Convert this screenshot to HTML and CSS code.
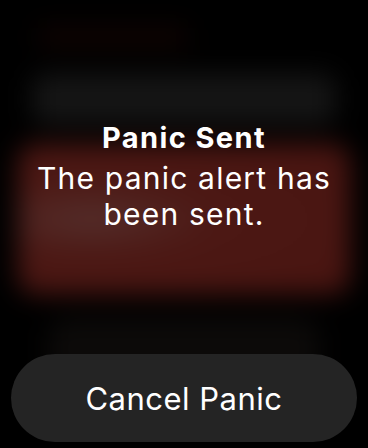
FILE: index.html
```html
<!DOCTYPE html>
<html lang="en">
<head>
    <meta charset="UTF-8">
    <meta name="viewport" content="width=device-width, initial-scale=1.0">
    <title>Panic Sent</title>
    <link rel="stylesheet" href="styles.css">
</head>
<body>
    <div class="screen">
        <!-- blurred app content behind the alert -->
        <div class="backdrop">
            <div class="blur-title"></div>
            <div class="blur-row"></div>
            <div class="blur-card"></div>
            <div class="blur-foot"></div>
        </div>

        <div class="alert">
            <div class="alert-text">
                <h1 class="alert-title">Panic Sent</h1>
                <p class="alert-message">The panic alert has been sent.</p>
            </div>
            <button class="btn-cancel">Cancel Panic</button>
        </div>
    </div>
</body>
</html>
```

FILE: styles.css
```css
* {
    margin: 0;
    padding: 0;
    box-sizing: border-box;
}

body {
    background-color: #000;
    font-family: 'Inter', 'Roboto', sans-serif;
    color: #fff;
    overflow: hidden;
}

.screen {
    position: relative;
    width: 368px;
    height: 448px;
}

.backdrop {
    position: absolute;
    inset: 0;
    display: flex;
    flex-direction: column;
    padding: 26px 18px 0;
    filter: blur(13px);
}

.blur-title {
    width: 150px;
    height: 22px;
    margin-left: 20px;
    background-color: #0f0302;
    border-radius: 6px;
}

.blur-row {
    height: 50px;
    margin: 26px 14px 0;
    background-color: #151515;
    border-radius: 14px;
}

.blur-card {
    height: 150px;
    margin-top: 20px;
    background: radial-gradient(ellipse at 22% 50%, #542e2b 0%, #4c1814 35%, #481410 100%);
    border-radius: 18px;
}

.blur-foot {
    height: 60px;
    margin: 24px 30px 0;
    background-color: #0c0a09;
    border-radius: 20px;
}

.alert {
    position: relative;
    height: 100%;
    display: flex;
    flex-direction: column;
    justify-content: space-between;
    align-items: center;
    padding: 121px 11px 6px;
}

.alert-text {
    text-align: center;
}

.alert-title {
    font-size: 29px;
    font-weight: 700;
    line-height: 34px;
    letter-spacing: 1.4px;
}

.alert-message {
    width: 320px;
    margin-top: 5px;
    font-size: 30px;
    font-weight: 400;
    line-height: 36px;
    letter-spacing: 1.2px;
}

.btn-cancel {
    width: 100%;
    height: 88px;
    border: none;
    border-radius: 44px;
    background-color: #242424;
    color: #fff;
    font-family: 'Inter', 'Roboto', sans-serif;
    font-size: 31px;
    font-weight: 400;
    letter-spacing: 0.5px;
}
```
